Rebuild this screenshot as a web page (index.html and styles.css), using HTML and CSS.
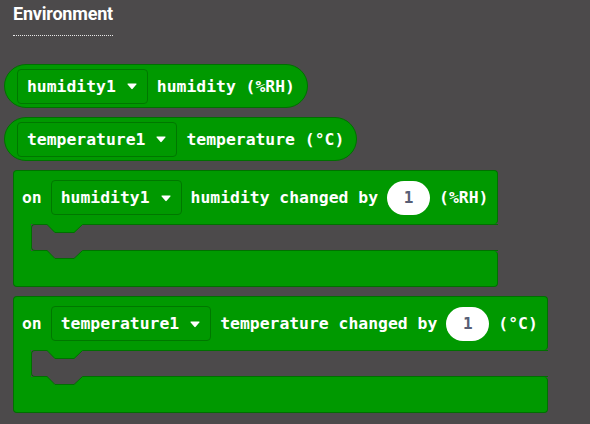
FILE: index.html
```html
<!DOCTYPE html>
<html>
<head>
<meta charset="utf-8">
<link rel="stylesheet" href="styles.css">
</head>
<body>
<div class="page">
  <div class="title"><span class="label">Environment</span></div>
  <div class="blocks">
    <div class="reporter">
      <div class="dd"><span>humidity1</span><svg class="caret" width="10" height="7" viewBox="0 0 10 7"><path d="M1 0.5 H9 Q10 0.5 9.3 1.4 L5.7 5.8 Q5 6.6 4.3 5.8 L0.7 1.4 Q0 0.5 1 0.5 Z" fill="#fff"/></svg></div>
      <span class="txt">humidity (%RH)</span>
    </div>
    <div class="reporter">
      <div class="dd"><span>temperature1</span><svg class="caret" width="10" height="7" viewBox="0 0 10 7"><path d="M1 0.5 H9 Q10 0.5 9.3 1.4 L5.7 5.8 Q5 6.6 4.3 5.8 L0.7 1.4 Q0 0.5 1 0.5 Z" fill="#fff"/></svg></div>
      <span class="txt">temperature (°C)</span>
    </div>
    <div class="event">
      <div class="head">
        <span class="txt">on</span>
        <div class="dd"><span>humidity1</span><svg class="caret" width="10" height="7" viewBox="0 0 10 7"><path d="M1 0.5 H9 Q10 0.5 9.3 1.4 L5.7 5.8 Q5 6.6 4.3 5.8 L0.7 1.4 Q0 0.5 1 0.5 Z" fill="#fff"/></svg></div>
        <span class="txt">humidity changed by</span>
        <span class="num">1</span>
        <span class="txt">(%RH)</span>
      </div>
      <div class="mouth">
        <div class="arm"></div>
        <div class="slot"><svg class="notch-top" width="36" height="10" viewBox="0 0 36 10"><path d="M0 0 L8 9 L27 9 L36 0 Z" fill="#009900"/><path d="M0 0.5 L8 8.5 L27 8.5 L35.5 0.5" fill="none" stroke="#007000" stroke-width="1"/></svg></div>
      </div>
      <div class="foot"><svg class="notch-bot" width="36" height="10" viewBox="0 0 36 10"><path d="M0 0 L8 9 L27 9 L36 0 Z" fill="#4c4a4b"/><path d="M0 0.5 L8 8.5 L27 8.5 L35.5 0.5" fill="none" stroke="#007000" stroke-width="1"/></svg></div>
    </div>
    <div class="event">
      <div class="head">
        <span class="txt">on</span>
        <div class="dd"><span>temperature1</span><svg class="caret" width="10" height="7" viewBox="0 0 10 7"><path d="M1 0.5 H9 Q10 0.5 9.3 1.4 L5.7 5.8 Q5 6.6 4.3 5.8 L0.7 1.4 Q0 0.5 1 0.5 Z" fill="#fff"/></svg></div>
        <span class="txt">temperature changed by</span>
        <span class="num">1</span>
        <span class="txt">(°C)</span>
      </div>
      <div class="mouth">
        <div class="arm"></div>
        <div class="slot"><svg class="notch-top" width="36" height="10" viewBox="0 0 36 10"><path d="M0 0 L8 9 L27 9 L36 0 Z" fill="#009900"/><path d="M0 0.5 L8 8.5 L27 8.5 L35.5 0.5" fill="none" stroke="#007000" stroke-width="1"/></svg></div>
      </div>
      <div class="foot"><svg class="notch-bot" width="36" height="10" viewBox="0 0 36 10"><path d="M0 0 L8 9 L27 9 L36 0 Z" fill="#4c4a4b"/><path d="M0 0.5 L8 8.5 L27 8.5 L35.5 0.5" fill="none" stroke="#007000" stroke-width="1"/></svg></div>
    </div>
  </div>
</div>
</body>
</html>
```
FILE: styles.css
```css
html, body {
  margin: 0;
  padding: 0;
  background: #4c4a4b;
  height: 100%;
  overflow: hidden;
}

.page {
  font-family: "DejaVu Sans Mono", monospace;
  font-weight: bold;
  font-size: 16.4px;
  color: #fff;
}

.title {
  padding: 3px 0 0 13px;
}

.label {
  display: inline-block;
  font-family: Roboto, "Liberation Sans", sans-serif;
  font-weight: bold;
  font-size: 18px;
  line-height: 21px;
  letter-spacing: -0.2px;
  padding-bottom: 11px;
  border-bottom: 1px dotted #e8e8e8;
}

.blocks {
  display: flex;
  flex-direction: column;
  align-items: flex-start;
  gap: 9px;
  margin-top: 28px;
}

.reporter {
  box-sizing: border-box;
  height: 44px;
  margin-left: 4px;
  display: flex;
  align-items: center;
  gap: 9px;
  padding: 0 12px 0 12px;
  background: #009900;
  border: 1px solid #007000;
  border-radius: 22px;
}

.dd {
  box-sizing: border-box;
  height: 35px;
  display: flex;
  align-items: center;
  gap: 11px;
  padding: 0 10px 0 9px;
  border: 1px solid #007700;
  border-radius: 4px;
}

.caret {
  display: block;
  margin-top: 1px;
}

.txt {
  white-space: nowrap;
}

.event {
  margin-left: 13px;
  display: flex;
  flex-direction: column;
}

.head {
  box-sizing: border-box;
  height: 54px;
  display: flex;
  align-items: center;
  gap: 9px;
  padding: 0 9px 0 8px;
  background: #009900;
  border: 1px solid #007000;
  border-bottom: none;
  border-radius: 4px 4px 4px 0;
}

.num {
  box-sizing: border-box;
  width: 43px;
  height: 34px;
  border-radius: 17px;
  background: #fff;
  color: #575e75;
  display: flex;
  align-items: center;
  justify-content: center;
  font-size: 16px;
}

.mouth {
  display: flex;
  height: 27px;
}

.arm {
  width: 17px;
  background: #009900;
  border-left: 1px solid #007000;
}

.slot {
  flex: 1;
  box-sizing: border-box;
  border: 1px solid #007000;
  border-right: none;
  border-radius: 4px 0 0 4px;
  display: flex;
  align-items: flex-start;
}

.notch-top {
  display: block;
  margin: -1px 0 0 15px;
}

.foot {
  box-sizing: border-box;
  height: 36px;
  display: flex;
  align-items: flex-start;
  background: #009900;
  border: 1px solid #007000;
  border-top: none;
  border-radius: 0 4px 4px 4px;
}

.notch-bot {
  display: block;
  margin: -1px 0 0 33px;
}
```
